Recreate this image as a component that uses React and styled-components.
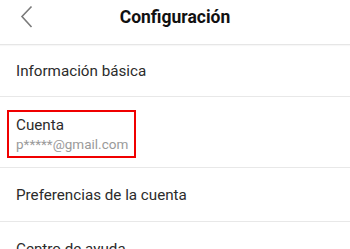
import React from "react";
import styled, { createGlobalStyle } from "styled-components";

const Global = createGlobalStyle`
  html, body { margin: 0; padding: 0; background: #fff; }
  body { font-family: Roboto, "Noto Sans", "Liberation Sans", sans-serif; }
`;

const Page = styled.div`
  width: 350px;
  height: 249px;
  overflow: hidden;
  background: #fff;
`;

const Header = styled.div`
  position: relative;
  height: 44px;
  display: flex;
  align-items: center;
  justify-content: center;
  border-bottom: 1px solid #e6e6e6;
  box-shadow: 0 1px 1px rgba(0,0,0,0.03);
`;

const Back = styled.button`
  position: absolute;
  left: 14px;
  top: 4px;
  width: 26px;
  height: 26px;
  padding: 0;
  border: 0;
  background: none;
  display: flex;
  align-items: center;
  justify-content: center;
`;

const Title = styled.h1`
  margin: 0;
  margin-top: -10px;
  font-size: 17.5px;
  font-weight: 700;
  color: #111;
`;

const Row = styled.div`
  height: ${(p) => p.$h}px;
  border-bottom: 1px solid #e8e8e8;
  padding-left: 16px;
  display: flex;
  flex-direction: column;
  justify-content: ${(p) => (p.$top ? "flex-start" : "center")};
  padding-top: ${(p) => p.$pt || 0}px;
  box-sizing: border-box;
`;

const Label = styled.div`
  font-size: 15.2px;
  line-height: 20px;
  color: #2b2b2b;
`;

const Sub = styled.div`
  font-size: 13.5px;
  line-height: 19px;
  color: #9a9a9a;
`;

const Highlight = styled.div`
  align-self: flex-start;
  margin-left: -9px;
  border: 2px solid #f00000;
  padding: 3px 6px 2px 7px;
`;

export default function App() {
  return (
    <Page>
      <Global />
      <Header>
        <Back aria-label="back">
          <svg width="14" height="24" viewBox="0 0 14 24">
            <path d="M11.5 1.5 L2 11.5 L11.5 22" fill="none" stroke="#7a7a7a" strokeWidth="1.6" />
          </svg>
        </Back>
        <Title>Configuración</Title>
      </Header>
      <Row $h={52}>
        <Label>Información básica</Label>
      </Row>
      <Row $h={71} $top $pt={13}>
        <Highlight>
          <Label>Cuenta</Label>
          <Sub>p*****@gmail.com</Sub>
        </Highlight>
      </Row>
      <Row $h={54}>
        <Label>Preferencias de la cuenta</Label>
      </Row>
      <Row $h={54}>
        <Label>Centro de ayuda</Label>
      </Row>
    </Page>
  );
}
